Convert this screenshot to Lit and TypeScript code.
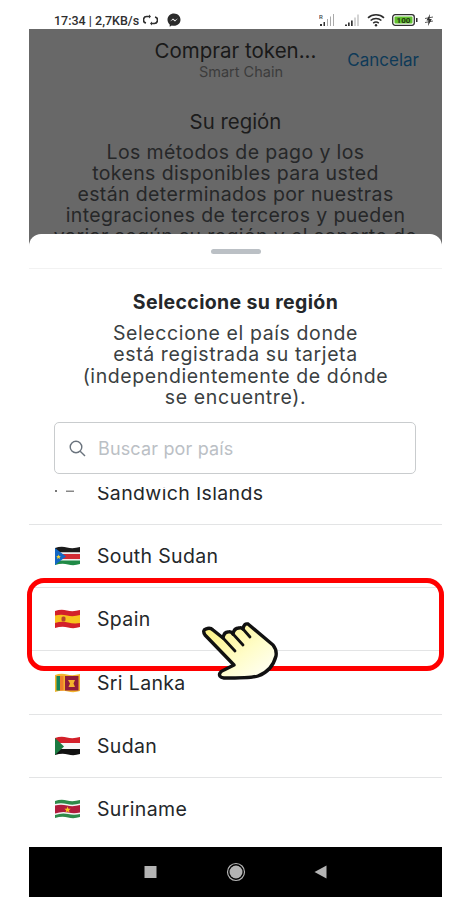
import { LitElement, html, css, svg } from "lit";
import { customElement } from "lit/decorators.js";

const wave = "M0 2Q6 0 12 1.5T25 1V18Q19 20 13 18.5T0 19Z";

const flags: Record<string, unknown> = {
  gs: svg`<path d="M0 0H2V2H0Z" fill="#777"/><path d="M11 .5H19V2H11Z" fill="#888"/>`,
  ss: svg`<path d="M0 2Q6 0 12 1.5T25 1V6.5H0Z" fill="#1b1b1b"/><path d="M0 6.5H25V8H0Z" fill="#eee"/><path d="M0 8H25V13H0Z" fill="#d22c35"/><path d="M0 13H25V14.5H0Z" fill="#eee"/><path d="M0 14.5H25V18Q19 20 13 18.5T0 19Z" fill="#1f8a46"/><path d="M0 2L11 10.5L0 19Z" fill="#1267c4"/><path d="M3.5 8.5l.7 1.6 1.7.2-1.3 1 .4 1.7-1.5-.9-1.4.9.3-1.7-1.2-1 1.7-.2Z" fill="#f8d531"/>`,
  es: svg`<path d="${wave}" fill="#d3202a"/><path d="M0 6.5Q6 5 12 6.5T25 6V14Q19 15 13 13.5T0 14Z" fill="#f8c21d"/><rect x="6.5" y="7.5" width="4" height="5" rx="1.5" fill="#b5452c"/>`,
  lk: svg`<path d="${wave}" fill="#f3b52d"/><path d="M1.5 3H5V17.5H1.5Z" fill="#15835a"/><path d="M5 3H8.5V17.5H5Z" fill="#ee7f2c"/><path d="M10 3H23.5V17.5H10Z" fill="#8f1d3a"/><path d="M13 7H20L18.5 10.5L20 14H13.5L15 10.5Z" fill="#f3b52d"/>`,
  sd: svg`<path d="M0 2Q6 0 12 1.5T25 1V7H0Z" fill="#d3202a"/><path d="M0 7H25V13H0Z" fill="#f6f6f6"/><path d="M0 13H25V18Q19 20 13 18.5T0 19Z" fill="#111"/><path d="M0 2L9 10.5L0 19Z" fill="#1c7a41"/>`,
  sr: svg`<path d="${wave}" fill="#2f8a4a"/><path d="M0 5Q6 3.5 12 5T25 4.5V15Q19 16.5 13 15T0 16Z" fill="#f5f5f5"/><path d="M0 6.5Q6 5 12 6.5T25 6V13.5Q19 15 13 13.5T0 14.5Z" fill="#b01b3c"/><path d="M12.5 7.5l.9 2.2 2.3.1-1.8 1.4.7 2.3-2.1-1.3-2 1.3.7-2.3-1.8-1.4 2.3-.1Z" fill="#f8c21d"/>`,
};

const rows = [
  { f: "gs", n: "Sandwich Islands", cut: true },
  { f: "ss", n: "South Sudan" },
  { f: "es", n: "Spain" },
  { f: "lk", n: "Sri Lanka" },
  { f: "sd", n: "Sudan" },
  { f: "sr", n: "Suriname" },
];

@customElement("app-root")
export class AppRoot extends LitElement {
  static styles = css`
    :host { display: block; width: 472px; height: 898px; background: #fff; position: relative; overflow: hidden; font-family: Inter, "Noto Sans", sans-serif; }
    .phone { width: 413px; height: 897px; margin-left: 29px; position: relative; display: flex; flex-direction: column; }
    .status { height: 29px; flex: none; display: flex; align-items: center; justify-content: space-between; padding: 11px 9px 0 25px; font: 500 12.5px Roboto, sans-serif; color: #2e2e2e; box-sizing: border-box; background: #fff; }
    .st-left, .st-right { display: flex; align-items: center; gap: 4px; }
    .st-right { gap: 7px; }
    .screen { flex: 1; background: #686868; display: flex; flex-direction: column; align-items: center; text-align: center; position: relative; overflow: hidden; }
    .head { height: 58px; width: 100%; flex: none; position: relative; display: flex; flex-direction: column; align-items: center; padding-top: 10px; box-sizing: border-box; }
    .head-title { font-size: 20.5px; line-height: 24px; color: #191919; }
    .head-sub { font-size: 14.5px; line-height: 17px; color: #3c3c3c; margin-left: 11px; }
    .cancel { position: absolute; right: 23px; top: 20px; font-size: 17px; line-height: 22px; color: #0e3a58; }
    .region { margin-top: 22px; font-size: 20.4px; line-height: 26px; color: #1c1c1c; }
    .info { margin: 7px 0 0; font-size: 19.5px; line-height: 21px; letter-spacing: 0.38px; color: #262728; white-space: nowrap; }
    .sheet { position: absolute; left: 0; right: 0; top: 205px; bottom: 0; background: #fff; border-radius: 12px 12px 0 0; display: flex; flex-direction: column; align-items: stretch; text-align: center; }
    .grab { height: 35px; flex: none; border-bottom: 1px solid #f2f2f2; display: flex; justify-content: center; align-items: flex-start; padding-top: 15px; box-sizing: border-box; }
    .grab i { display: block; width: 50px; height: 5px; border-radius: 3px; background: #bbc0c5; }
    .title { margin: 21px 0 0; font-size: 19.5px; line-height: 24px; letter-spacing: 0.35px; font-weight: 700; color: #24272a; }
    .desc { margin: 9px 0 0; font-size: 19.5px; line-height: 21.3px; letter-spacing: 0.6px; color: #3b3f42; white-space: nowrap; }
    .search { flex: none; margin: 14px 26px 0 25px; height: 52px; border: 1px solid #c9ccce; border-radius: 5px; box-sizing: border-box; display: flex; align-items: center; padding-left: 14px; gap: 12px; }
    .search span { font-size: 18px; letter-spacing: 0.15px; color: #bbc0c5; }
    .list { flex: 1; overflow: hidden; margin-top: 13px; min-height: 0; }
    .row { height: 63.4px; border-bottom: 1.5px solid #e3e4e5; box-sizing: border-box; display: flex; align-items: center; padding-left: 26px; gap: 17px; font-size: 19.5px; letter-spacing: 0.35px; color: #24272a; text-align: left; }
    .row.cut { height: 37.5px; align-items: flex-start; }
    .row.cut span { line-height: 22px; margin-top: -5px; }
    .row.cut svg { margin-top: 3px; }
    .nav { height: 50px; flex: none; background: #000; display: flex; align-items: center; justify-content: center; position: relative; }
    .nav svg { display: block; }
    .phone-gap { height: 6px; flex: none; }
    .mark { position: absolute; left: 27px; top: 578px; width: 417px; height: 93px; box-sizing: border-box; border: 5px solid #f00; border-radius: 17px; pointer-events: none; }
    .hand { position: absolute; left: 190px; top: 570px; }
  `;

  private statusLeft() {
    return html`<div class="st-left"><span>17:34 | 2,7KB/s</span>
      <svg width="15" height="12" viewBox="0 0 15 12" fill="none" stroke="#2e2e2e" stroke-width="1.7"><path d="M6 2.5H4A3.3 3.3 0 0 0 3 9M9 9.5H11A3.3 3.3 0 0 0 12 3"/><path d="M6 .5V4.5L8 2.5ZM9 7.5V11.5L7 9.5Z" fill="#2e2e2e" stroke="none"/></svg>
      <svg style="margin-left:5px" width="14" height="14" viewBox="0 0 14 14"><path d="M7 .5C3.3.5.5 3.2.5 6.7c0 1.9.8 3.5 2.2 4.7v2.3l2.1-1.2c.7.2 1.4.3 2.2.3 3.7 0 6.5-2.7 6.5-6.1S10.7.5 7 .5Z" fill="#2b2b2b"/><path d="M3 8.5L6 5.5L8 7.3L11 5.3L8 8.5L6 6.8Z" fill="#fff"/></svg></div>`;
  }

  private statusRight() {
    return html`<div class="st-right">
      <svg width="18" height="14" viewBox="0 0 18 14"><text x="0" y="5.5" font-family="Roboto" font-size="6" fill="#444">R</text><path d="M1 11h2v2H1zM4.5 9h1.5v4H4.5z" fill="#333"/><path d="M8 6h1v7H8zM11 3.5h1V13h-1zM14 1h1v12h-1z" fill="#aaa"/></svg>
      <svg width="16" height="14" viewBox="0 0 16 14"><path d="M1 11.5h2v1.5H1zM4 9.5h1.7V13H4zM7 7.5h1.7V13H7z" fill="#333"/><path d="M10.5 4.5h1V13h-1zM13.5 1.5h1V13h-1z" fill="#aaa"/></svg>
      <svg width="18" height="14" viewBox="0 0 18 14" fill="none" stroke="#2c2c2c" stroke-width="1.6"><path d="M1 4.8C5.5.7 12.5.7 17 4.8M3.6 7.5C6.7 4.9 11.3 4.9 14.4 7.5M6.2 10.1C7.8 8.9 10.2 8.9 11.8 10.1"/><circle cx="9" cy="12.2" r="1.2" fill="#2c2c2c" stroke="none"/></svg>
      <svg width="26" height="12" viewBox="0 0 26 12"><rect x=".7" y=".7" width="21.6" height="10.6" rx="2.5" fill="#fff" stroke="#2f2f2f" stroke-width="1.3"/><rect x="2.5" y="2.5" width="18" height="7" rx="1" fill="#62c22f"/><text x="11.5" y="8.7" text-anchor="middle" font-family="Roboto" font-weight="700" font-size="8" fill="#1f2f14">100</text><rect x="24" y="4" width="1.5" height="4" fill="#2f2f2f"/></svg>
      <svg width="8" height="12" viewBox="0 0 8 12"><path d="M5 0L1.5 6.5H3.5L3 12L6.8 5H4.5Z" fill="#333"/><path d="M0 4.5L8 3M0 8.5L8 7" stroke="#333" stroke-width=".8"/></svg></div>`;
  }

  render() {
    return html`
      <div class="phone">
        <div class="status">${this.statusLeft()}${this.statusRight()}</div>
        <div class="screen">
          <div class="head">
            <div class="head-title">Comprar token...</div>
            <div class="head-sub">Smart Chain</div>
            <div class="cancel">Cancelar</div>
          </div>
          <div class="region">Su región</div>
          <p class="info">Los métodos de pago y los<br />tokens disponibles para usted<br />están determinados por nuestras<br />integraciones de terceros y pueden<br />variar según su región y el soporte de</p>
          <div class="sheet">
            <div class="grab"><i></i></div>
            <h2 class="title">Seleccione su región</h2>
            <p class="desc">Seleccione el país donde<br />está registrada su tarjeta<br />(independientemente de dónde<br />se encuentre).</p>
            <div class="search">
              <svg width="17" height="17" viewBox="0 0 17 17" fill="none" stroke="#6a737d" stroke-width="1.4"><circle cx="7" cy="7" r="5.8"/><path d="M11.2 11.2L16 16"/></svg>
              <span>Buscar por país</span>
            </div>
            <div class="list">
              ${rows.map(
                (r) => html`<div class="row ${r.cut ? "cut" : ""}">
                  <svg width="25" height="20" viewBox="0 0 25 20">${flags[r.f]}</svg>
                  <span>${r.n}</span>
                </div>`
              )}
            </div>
            <div class="phone-gap"></div>
            <div class="nav">
              <svg width="260" height="24" viewBox="0 0 260 24"><rect x="38.5" y="6" width="12" height="12" fill="#b4b4b4"/><circle cx="130" cy="12" r="8.5" fill="none" stroke="#b4b4b4" stroke-width="1.2"/><circle cx="130" cy="12" r="6.5" fill="#b4b4b4"/><path d="M220.5 5.5V18.5L208.5 12Z" fill="#b4b4b4"/></svg>
            </div>
          </div>
        </div>
      </div>
      <div class="mark"></div>
      <svg class="hand" width="110" height="120" viewBox="0 0 110 120">
        <defs><linearGradient id="hg" x1="0" y1="0" x2="1" y2="1"><stop offset="0" stop-color="#fdf07a"/><stop offset=".55" stop-color="#fffdc8"/><stop offset="1" stop-color="#fff" /></linearGradient></defs>
        <path d="M15 65Q12 60 16 59Q20 57 23 60L33 68Q34 62 38 62Q41 61 43 64Q44 58 49 58Q51 57 53 59Q54 53 58 54L83 75Q87 80 86 86Q82 101 68 106Q62 108 34 108Q28 107 30 103Q31 101 34 100L44 95Z" fill="url(#hg)" stroke="#111" stroke-width="3.4" stroke-linejoin="round"/>
        <path d="M33 68L45 81M43 64L53 75M53 59L60 67" stroke="#111" stroke-width="2.8" stroke-linecap="round" fill="none"/>
      </svg>
    `;
  }
}
